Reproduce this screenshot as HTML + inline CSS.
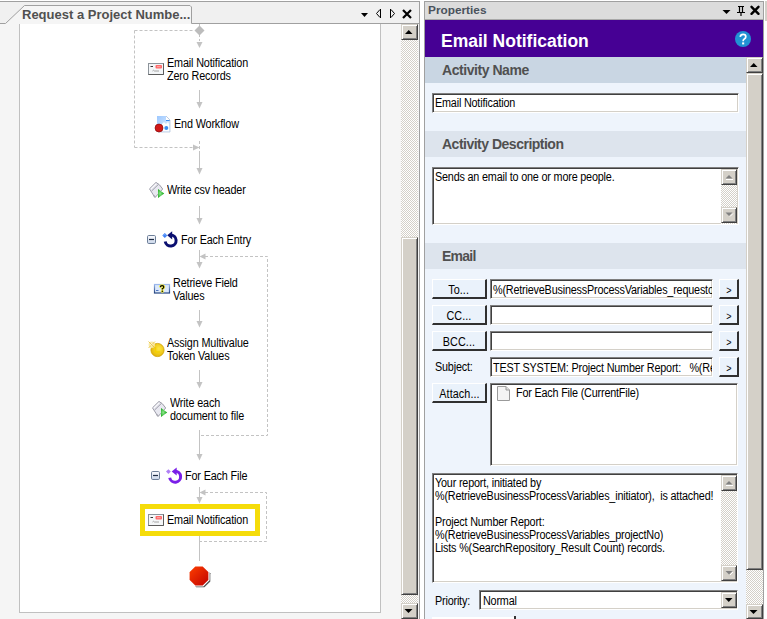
<!DOCTYPE html>
<html><head><meta charset="utf-8">
<style>
*{box-sizing:border-box;margin:0;padding:0}
html,body{width:767px;height:619px;overflow:hidden;background:#fff;font-family:"Liberation Sans",sans-serif;font-size:11px;color:#000}
.a{position:absolute}
.t{position:absolute;white-space:pre;font-size:12px;letter-spacing:-0.2px;line-height:13px;color:#000;transform:scaleX(0.9);transform-origin:0 0}
.btn span{display:inline-block;transform:scaleX(0.9);font-size:12px;letter-spacing:0.1px}
.hl{position:absolute;background:#a0a0a0}
.dash-h{position:absolute;height:1px;background:repeating-linear-gradient(90deg,#b4b4b4 0 3px,transparent 3px 5px)}
.dash-v{position:absolute;width:1px;background:repeating-linear-gradient(180deg,#b4b4b4 0 3px,transparent 3px 5px)}
.ln{position:absolute;width:1px;background:#c0c0c0}
.chk{background-color:#fff;background-image:linear-gradient(45deg,#d4d0c8 25%,transparent 25%,transparent 75%,#d4d0c8 75%),linear-gradient(45deg,#d4d0c8 25%,transparent 25%,transparent 75%,#d4d0c8 75%);background-size:2px 2px;background-position:0 0,1px 1px}
.sbtn{position:absolute;background:#d4d0c8;border-top:1px solid #d4d0c8;border-left:1px solid #d4d0c8;border-right:1px solid #404040;border-bottom:1px solid #404040;box-shadow:inset 1px 1px 0 #fff,inset -1px -1px 0 #808080}
.fld{position:absolute;background:#fff;border-top:1px solid #808080;border-left:1px solid #808080;border-right:1px solid #fff;border-bottom:1px solid #fff;box-shadow:inset 1px 1px 0 #404040,inset -1px -1px 0 #d4d0c8}
.btn{position:absolute;background:#eaf2fb;border-top:1px solid #fff;border-left:1px solid #fff;border-right:2px solid #303030;border-bottom:2px solid #303030;text-align:center;line-height:16px;padding-top:2px}
.hdr{position:absolute;left:425px;width:321px;font-weight:bold;font-size:13px;color:#505050;letter-spacing:0.15px;white-space:pre}
</style></head><body>

<!-- ============ LEFT PANEL ============ -->
<div class="a" style="left:0;top:1px;width:420px;height:618px;background:#f5f5f5"></div>
<!-- tab strip -->
<div class="a" style="left:0;top:1px;width:420px;height:23px;background:#f0f0f0"></div>
<div class="hl" style="left:0;top:1px;width:420px;height:1px"></div>
<svg class="a" style="left:0;top:0" width="419" height="25">
  <polygon points="0,23.5 5.5,23.5 25,5.5 190.5,5.5 191.5,6.5 191.5,24 0,24" fill="#f5f5f5"/>
  <polyline points="0,23.5 5.5,23.5 24.5,5.5 190,5.5 191.5,7 191.5,23.5 419,23.5" fill="none" stroke="#a0a0a0" stroke-width="1"/>
</svg>
<div class="a" style="left:22px;top:7px;font-weight:bold;font-size:13px;color:#505050;white-space:pre;line-height:16px">Request a Project Numbe...</div>
<!-- tab strip icons -->
<svg class="a" style="left:355px;top:4px" width="62" height="18">
  <polygon points="6,9 13,9 9.5,13" fill="#000"/>
  <path d="M25.5,5 V14 M25,5.5 L21.5,9.5 L25,13.5" fill="none" stroke="#000" stroke-width="1"/>
  <path d="M35.5,5 V14 M36,5.5 L39.5,9.5 L36,13.5" fill="none" stroke="#000" stroke-width="1"/>
  <path d="M48,6 L56,14 M56,6 L48,14" stroke="#000" stroke-width="2.2"/>
</svg>
<div class="hl" style="left:419px;top:1px;width:1px;height:618px"></div>

<!-- canvas -->
<div class="a" style="left:19px;top:24px;width:362px;height:589px;background:#fff;border-left:1px solid #c0c0c0;border-right:1px solid #c0c0c0;border-bottom:1px solid #c0c0c0"></div>

<!-- canvas content -->
<svg class="a" style="left:0;top:0" width="420" height="619">
  <defs>
    <linearGradient id="exp" x1="0" y1="0" x2="0" y2="1"><stop offset="0" stop-color="#fdfdff"/><stop offset="1" stop-color="#c9d6ea"/></linearGradient>
    <linearGradient id="stopg" x1="0" y1="0" x2="1" y2="1"><stop offset="0" stop-color="#ff4000"/><stop offset="1" stop-color="#c00000"/></linearGradient>
    <radialGradient id="grn" cx="0.35" cy="0.5" r="0.65"><stop offset="0" stop-color="#90e890"/><stop offset="1" stop-color="#009a00"/></radialGradient>
    <radialGradient id="coin" cx="0.6" cy="0.4" r="0.7"><stop offset="0" stop-color="#ffe640"/><stop offset="1" stop-color="#e0b000"/></radialGradient>
    <linearGradient id="qbox" x1="0" y1="0" x2="0" y2="1"><stop offset="0" stop-color="#9cb8ec"/><stop offset="1" stop-color="#22427e"/></linearGradient>
    <linearGradient id="doc" x1="0" y1="0" x2="1" y2="1"><stop offset="0" stop-color="#9cc8ff"/><stop offset="1" stop-color="#e4f0ff"/></linearGradient>
    <symbol id="mail" viewBox="0 0 16 12" width="16" height="12">
      <rect x="0.5" y="0.5" width="15" height="11" fill="#f4f6f8" stroke="#8c939a"/>
      <path d="M0.5,11.5 H15.5 V0.5" fill="none" stroke="#5c5c5c"/>
      <path d="M2.5,3.5 H5" stroke="#333" stroke-width="1"/>
      <rect x="7.5" y="2" width="6.5" height="3.5" rx="1" fill="#ff6a6a"/>
      <path d="M9,3.7 H12.5" stroke="#ffc0c0" stroke-width="0.8"/>
      <path d="M4.5,8 Q5.5,6.5 6.5,8 H11" stroke="#9a9a9a" stroke-width="0.9" fill="none"/>
    </symbol>
    <symbol id="write" viewBox="0 0 16 16" width="16" height="16">
      <polygon points="0.5,6.8 7,0.4 10.5,2.9 13.7,7 6,15.6" fill="#e8e8f0" stroke="#9c9ca8" stroke-width="1"/>
      <path d="M2.6,9 L9.6,2.2" stroke="#9c9ca8" stroke-width="1"/>
      <path d="M1.8,7 L7.2,1.7" stroke="#fff" stroke-width="1"/>
      <path d="M4,14 Q5,13 6.5,14.5" stroke="#a0a0a8" stroke-width="0.8" fill="none"/>
      <polygon points="9,7 15.2,11.5 9,16" fill="url(#grn)"/>
    </symbol>
    <symbol id="expand" viewBox="0 0 9 9" width="9" height="9">
      <rect x="0.5" y="0.5" width="8" height="8" rx="1.2" fill="url(#exp)" stroke="#6d7f98"/>
      <path d="M2,4.5 H7" stroke="#1e2c44" stroke-width="1.2"/>
    </symbol>
  </defs>

  <!-- connectors -->
  <g fill="none" stroke="#c3c3c3" stroke-width="1">
    <path d="M199.5,24 V26"/>
    <path d="M134.5,30.5 H194" stroke-dasharray="3,2"/>
    <path d="M134.5,30.5 V147.5" stroke-dasharray="3,2"/>
    <path d="M134.5,147.5 H193" stroke-dasharray="3,2"/>
    <path d="M199.5,35 V42" stroke-dasharray="2,2"/>
    <path d="M199.5,90 V103"/>
    <path d="M199.5,141 V152" stroke-dasharray="3,2"/>
    <path d="M199.5,152 V169"/>
    <path d="M199.5,206 V219"/>
    <path d="M199.5,250 V263"/>
    <path d="M205,256.5 H267.5 V435.5 H199.5" stroke-dasharray="3,2"/>
    <path d="M199.5,310 V322"/>
    <path d="M199.5,370 V383"/>
    <path d="M199.5,430 V455"/>
    <path d="M199.5,487 V498"/>
    <path d="M205,492.5 H266.5 V541.5 H199.5" stroke-dasharray="3,2"/>
    <path d="M199.5,536 V561"/>
  </g>
  <g fill="#c3c3c3">
    <polygon points="194.5,30.5 199.5,25.5 204.5,30.5 199.5,35.5" fill="#bcbcbc"/>
    <polygon points="196.5,42 202.5,42 199.5,48"/>
    <polygon points="193,144.5 193,150.5 199.5,147.5"/>
    <polygon points="196.5,102 202.5,102 199.5,108.5"/>
    <polygon points="196.5,168 202.5,168 199.5,174.5"/>
    <polygon points="196.5,218 202.5,218 199.5,224.5"/>
    <polygon points="196.5,262 202.5,262 199.5,268.5"/>
    <polygon points="205.5,253.5 205.5,259.5 199.5,256.5"/>
    <polygon points="196.5,321 202.5,321 199.5,327.5"/>
    <polygon points="196.5,382 202.5,382 199.5,388.5"/>
    <polygon points="196.5,454 202.5,454 199.5,460.5"/>
    <polygon points="196.5,497 202.5,497 199.5,503.5"/>
    <polygon points="205.5,489.5 205.5,495.5 199.5,492.5"/>
  </g>

  <!-- highlight -->
  <rect x="142.5" y="506.5" width="115" height="27" fill="#fff" stroke="#f5dc0a" stroke-width="5"/>

  <!-- icons -->
  <use href="#mail" x="148" y="63"/>
  <g>
    <path d="M157,116 H166 L170,120 V132 H157 Z" fill="url(#doc)"/>
    <path d="M166,116 L170,120 H166 Z" fill="#fff"/>
    <path d="M166,116 L170,120" stroke="#b0c0d8" stroke-width="0.8"/>
    <path d="M166,120.5 H170" stroke="#3c8cf0" stroke-width="1"/>
    <path d="M162,124 L164,122 L166,124 L168,122 L169,124 V131.5 H160 Z" fill="#fff" opacity="0.9"/>
    <path d="M170,120 V132 H158" stroke="#b8c8e0" stroke-width="0.8" fill="none"/>
    <circle cx="166.3" cy="128" r="2" fill="#3a8ef0"/>
    <circle cx="159" cy="128" r="4" fill="#d01818" stroke="#800000" stroke-width="0.6"/>
  </g>
  <use href="#write" x="149" y="182"/>
  <use href="#expand" x="147" y="235"/>
  <g>
    <path d="M165.2,241.5 A5.5,5.5 0 1 0 170.5,235" fill="none" stroke="#0a0f70" stroke-width="3"/>
    <polygon points="167.2,235.3 172.2,231.2 172.2,239.4" fill="#0a0f70"/>
    <polygon points="162.3,235.6 164.8,233.1 167.3,235.6 164.8,238.1" fill="#3b7ff5"/><path d="M163.6,235.6 L164.8,234.4 L166,235.6" stroke="#9cc4ff" stroke-width="0.7" fill="none"/>
  </g>
  <g>
    <rect x="154.5" y="284.5" width="15" height="8.5" fill="#dce9fb" stroke="url(#qbox)" stroke-width="1.2"/>
    <path d="M156,290.5 H158.5" stroke="#3d66b8" stroke-width="0.9"/>
    <path d="M160.4,287.2 Q160.4,285.6 162.1,285.6 Q163.8,285.6 163.8,287.1 Q163.8,288.2 162.3,288.8 V289.6" fill="none" stroke="#f4ec40" stroke-width="2.8"/>
    <circle cx="162.3" cy="291.2" r="1.5" fill="#f4ec40"/>
    <path d="M160.4,287.2 Q160.4,285.6 162.1,285.6 Q163.8,285.6 163.8,287.1 Q163.8,288.2 162.3,288.8 V289.6" fill="none" stroke="#000" stroke-width="1.2"/>
    <circle cx="162.3" cy="291.2" r="0.7" fill="#000"/>
  </g>
  <g>
    <circle cx="157.5" cy="350" r="6.6" fill="url(#coin)" stroke="#d0a000" stroke-width="0.8"/>
    <path d="M155.5,347 V352 H160" stroke="#f5d000" stroke-width="1.4" fill="none"/>
    <circle cx="151.8" cy="344.8" r="3.2" fill="#f8e8a0" opacity="0.9"/>
    <circle cx="151.8" cy="344.8" r="1.4" fill="#fff"/>
    <path d="M148.5,341.5 L155,348 M155,341.5 L148.5,348" stroke="#e8c030" stroke-width="0.8"/>
  </g>
  <use href="#write" x="152" y="401"/>
  <use href="#expand" x="151" y="471"/>
  <g>
    <path d="M169.7,477.7 A5.5,5.5 0 1 0 175,471.2" fill="none" stroke="#7a1ee8" stroke-width="3"/>
    <polygon points="171.7,471.5 176.7,467.4 176.7,475.6" fill="#7a1ee8"/>
    <polygon points="166,471.6 168.4,469.2 170.8,471.6 168.4,474" fill="#b080f5"/>
  </g>
  <use href="#mail" x="148" y="514"/>
  <g>
    <polygon points="194.9,566 203.1,566 209,571.9 209,580.1 203.1,586 194.9,586 189,580.1 189,571.9" fill="#303030" transform="translate(1.3,1.3)" opacity="0.85"/>
    <polygon points="194.9,566 203.1,566 209,571.9 209,580.1 203.1,586 194.9,586 189,580.1 189,571.9" fill="url(#stopg)" stroke="#fff" stroke-width="1.2"/>
  </g>
</svg>
<div class="t" style="left:167px;top:57px;letter-spacing:-0.15px">Email Notification
Zero Records</div>
<div class="t" style="left:174px;top:118px;letter-spacing:-0.15px">End Workflow</div>
<div class="t" style="left:167px;top:184px;letter-spacing:-0.15px">Write csv header</div>
<div class="t" style="left:181px;top:234px;letter-spacing:-0.15px">For Each Entry</div>
<div class="t" style="left:173px;top:277px;letter-spacing:-0.15px">Retrieve Field
Values</div>
<div class="t" style="left:167px;top:337px;letter-spacing:-0.15px">Assign Multivalue
Token Values</div>
<div class="t" style="left:170px;top:397px;letter-spacing:-0.15px">Write each
document to file</div>
<div class="t" style="left:185px;top:470px;letter-spacing:-0.15px">For Each File</div>
<div class="t" style="left:167px;top:514px;letter-spacing:-0.15px">Email Notification</div>

<!-- left scrollbar -->
<div class="a chk" style="left:401px;top:24px;width:17px;height:595px"></div>
<div class="sbtn" style="left:401px;top:24px;width:17px;height:16px"></div>
<svg class="a" style="left:401px;top:24px" width="17" height="16"><polygon points="4,10 11.5,10 7.75,6" fill="#000"/></svg>
<div class="sbtn" style="left:401px;top:237px;width:17px;height:358px"></div>
<div class="sbtn" style="left:401px;top:603px;width:17px;height:16px"></div>
<svg class="a" style="left:401px;top:603px" width="17" height="16"><polygon points="3.5,6 11.5,6 7.5,10" fill="#000"/></svg>

<!-- ============ RIGHT PANEL ============ -->
<div class="a" style="left:764px;top:0;width:3px;height:619px;background:#fff"></div>
<div class="a" style="left:765px;top:1px;width:2px;height:20px;background:#d4d0c8"></div>
<div class="a" style="left:424px;top:1px;width:340px;height:618px;background:#eef4fc;border:1px solid #a0a0a0;border-bottom:none"></div>
<div class="a" style="left:425px;top:2px;width:338px;height:18px;background:#dcdcdc;border-bottom:1px solid #a8a8a8"></div>
<div class="a" style="left:428px;top:3px;font-weight:bold;font-size:11px;color:#4a525c;white-space:pre;line-height:14px;transform:scaleX(1.075);transform-origin:0 0">Properties</div>
<svg class="a" style="left:718px;top:3px" width="46" height="16">
  <polygon points="4.5,7 12.5,7 8.5,11" fill="#000"/>
  <path d="M20,3.5 H26 M21.5,3.5 V9 M24.5,3.5 V9 M19,9.5 H27 M23,9.5 V13" stroke="#000" stroke-width="1.2" fill="none"/>
  <path d="M33.5,3.8 L40.5,10.8 M40.5,3.8 L33.5,10.8" stroke="#000" stroke-width="2.4" stroke-linecap="round"/>
</svg>
<div class="a" style="left:425px;top:20px;width:338px;height:37px;background:#460094"></div>
<div class="a" style="left:441px;top:31px;font-weight:bold;font-size:17.5px;color:#fff;white-space:pre;line-height:20px">Email Notification</div>
<svg class="a" style="left:734px;top:30px" width="18" height="18">
  <circle cx="9" cy="9" r="8" fill="#2191d3"/>
  <path d="M6.2,6.8 Q6.6,4.4 9.1,4.4 Q11.8,4.4 11.8,6.7 Q11.8,8.1 10.3,9 Q9.1,9.7 9.1,11.2" fill="none" stroke="#fff" stroke-width="1.7"/>
  <rect x="8.1" y="12.4" width="2.1" height="2" fill="#fff"/>
</svg>

<div class="a" style="left:425px;top:57px;width:321px;height:26px;background:#c9d6e3"></div>
<div class="hdr" style="left:442px;top:62px;line-height:16px;font-size:14px;letter-spacing:-0.45px">Activity Name</div>
<div class="fld" style="left:432px;top:93px;width:307px;height:20px"></div>
<div class="t" style="left:435px;top:97px">Email Notification</div>

<div class="a" style="left:425px;top:131px;width:321px;height:26px;background:#dde4ed"></div>
<div class="hdr" style="left:442px;top:136px;line-height:16px;font-size:14px;letter-spacing:-0.5px">Activity Description</div>
<div class="fld" style="left:432px;top:167px;width:307px;height:58px"></div>
<div class="t" style="left:435px;top:171px">Sends an email to one or more people.</div>
<div class="a chk" style="left:721px;top:169px;width:16px;height:55px"></div>
<div class="sbtn" style="left:721px;top:169px;width:16px;height:16px"></div>
<svg class="a" style="left:721px;top:169px" width="16" height="15"><polygon points="4.5,9.5 11.5,9.5 8,6" fill="#808080"/><path d="M5,10.5 H12" stroke="#fff"/></svg>
<div class="sbtn" style="left:721px;top:207px;width:16px;height:16px"></div>
<svg class="a" style="left:721px;top:207px" width="16" height="16"><polygon points="4.5,5.5 11.5,5.5 8,9" fill="#808080"/><path d="M9,9.5 L12,6.5" stroke="#fff"/></svg>

<div class="a" style="left:425px;top:243px;width:321px;height:26px;background:#dde4ed"></div>
<div class="hdr" style="left:442px;top:248px;line-height:16px;font-size:14px;letter-spacing:-0.75px">Email</div>

<div class="btn" style="left:432px;top:279px;width:55px;height:20px"><span>To...</span></div>
<div class="fld" style="left:490px;top:279px;width:223px;height:20px;overflow:hidden"><div class="t" style="left:2px;top:4px">%(RetrieveBusinessProcessVariables_requestor)</div></div>
<div class="btn" style="left:719px;top:279px;width:20px;height:20px"><span style="font-size:10px">&gt;</span></div>

<div class="btn" style="left:432px;top:305px;width:55px;height:20px"><span>CC...</span></div>
<div class="fld" style="left:490px;top:305px;width:223px;height:20px"></div>
<div class="btn" style="left:719px;top:305px;width:20px;height:20px"><span style="font-size:10px">&gt;</span></div>

<div class="btn" style="left:432px;top:331px;width:55px;height:20px"><span>BCC...</span></div>
<div class="fld" style="left:490px;top:331px;width:223px;height:20px"></div>
<div class="btn" style="left:719px;top:331px;width:20px;height:20px"><span style="font-size:10px">&gt;</span></div>

<div class="t" style="left:435px;top:361px">Subject:</div>
<div class="fld" style="left:490px;top:357px;width:223px;height:20px;overflow:hidden"><div class="t" style="left:2px;top:4px">TEST SYSTEM: Project Number Report:   %(RetrieveBusinessProcessVariables_projectNo)</div></div>
<div class="btn" style="left:719px;top:357px;width:20px;height:20px"><span style="font-size:10px">&gt;</span></div>

<div class="btn" style="left:432px;top:383px;width:55px;height:20px"><span>Attach...</span></div>
<div class="fld" style="left:490px;top:383px;width:248px;height:83px"></div>
<svg class="a" style="left:496px;top:385px" width="16" height="17">
  <path d="M1.5,1.5 H10 L13.5,5 V15.5 H1.5 Z" fill="#f4f4f4" stroke="#9a9a9a"/>
  <path d="M10,1.5 V5 H13.5" fill="#e0e0e0" stroke="#9a9a9a"/>
</svg>
<div class="t" style="left:516px;top:387px">For Each File (CurrentFile)</div>

<div class="fld" style="left:432px;top:473px;width:306px;height:110px"></div>
<div class="t" style="left:435px;top:477px">Your report, initiated by
%(RetrieveBusinessProcessVariables_initiator),  is attached!

Project Number Report:
%(RetrieveBusinessProcessVariables_projectNo)
Lists %(SearchRepository_Result Count) records.</div>
<div class="a chk" style="left:721px;top:475px;width:16px;height:106px"></div>
<div class="sbtn" style="left:721px;top:475px;width:16px;height:16px"></div>
<svg class="a" style="left:721px;top:475px" width="16" height="16"><polygon points="4.5,9.5 11.5,9.5 8,6" fill="#808080"/><path d="M5,10.5 H12" stroke="#fff"/></svg>
<div class="sbtn" style="left:721px;top:565px;width:16px;height:16px"></div>
<svg class="a" style="left:721px;top:565px" width="16" height="16"><polygon points="4.5,6 11.5,6 8,9.5" fill="#808080"/><path d="M9,10 L12,7" stroke="#fff"/></svg>

<div class="t" style="left:435px;top:595px">Priority:</div>
<div class="fld" style="left:479px;top:590px;width:259px;height:20px"></div>
<div class="t" style="left:483px;top:595px">Normal</div>
<div class="sbtn" style="left:721px;top:592px;width:16px;height:16px"></div>
<svg class="a" style="left:721px;top:592px" width="16" height="16"><polygon points="4,6 11.5,6 7.75,10" fill="#000"/></svg>
<div class="a" style="left:432px;top:617px;width:83px;height:2px;background:#fff"></div><div class="a" style="left:514px;top:616px;width:2px;height:3px;background:#333"></div>

<!-- right scrollbar -->
<div class="a chk" style="left:746px;top:57px;width:17px;height:562px"></div>
<div class="sbtn" style="left:746px;top:57px;width:17px;height:16px"></div>
<svg class="a" style="left:746px;top:57px" width="17" height="16"><polygon points="4,10 11.5,10 7.75,6" fill="#000"/></svg>
<div class="sbtn" style="left:746px;top:73px;width:17px;height:497px"></div>
<div class="sbtn" style="left:746px;top:604px;width:17px;height:15px"></div>
<svg class="a" style="left:746px;top:604px" width="17" height="15"><polygon points="3.5,6 11.5,6 7.5,10" fill="#000"/></svg>
</body>
</html>
